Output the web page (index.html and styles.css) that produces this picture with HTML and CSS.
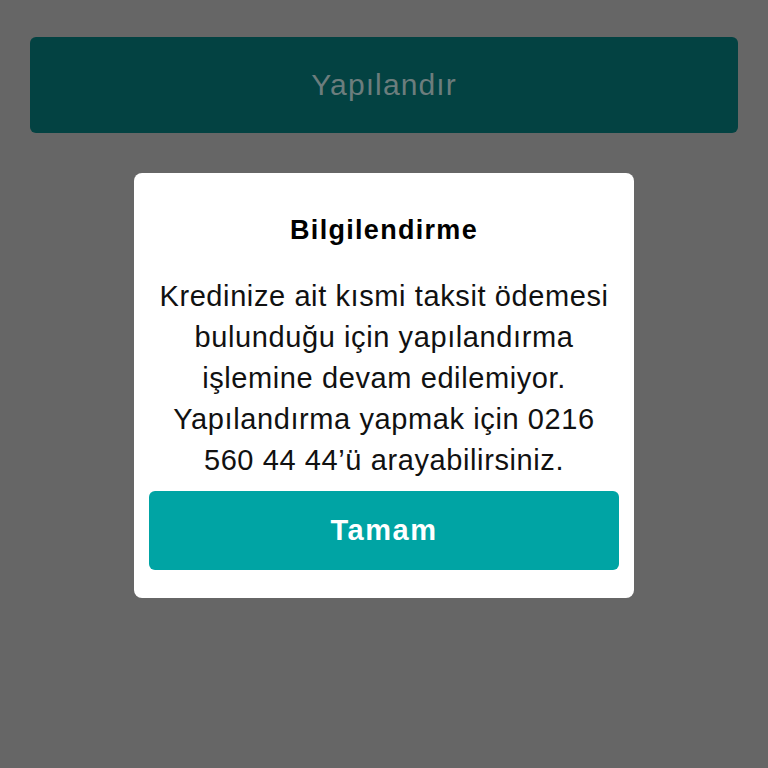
FILE: index.html
```html
<!DOCTYPE html>
<html lang="tr">
<head>
    <meta charset="UTF-8">
    <meta name="viewport" content="width=device-width, initial-scale=1.0">
    <title>Yapılandır</title>
    <link rel="stylesheet" href="styles.css">
</head>
<body>
    <main class="page">
        <button class="main-btn">Yapılandır</button>

        <div class="dialog">
            <h3 class="dialog-title">Bilgilendirme</h3>
            <p class="dialog-text">Kredinize ait kısmi taksit ödemesi<br>bulunduğu için yapılandırma<br>işlemine devam edilemiyor.<br>Yapılandırma yapmak için 0216<br>560 44 44’ü arayabilirsiniz.</p>
            <button class="ok-btn">Tamam</button>
        </div>
    </main>
</body>
</html>
```

FILE: styles.css
```css
/* Basic page styles */
body {
    font-family: "Liberation Sans", Arial, sans-serif;
    background-color: #666666;
    margin: 0;
    padding: 0;
}

.page {
    display: flex;
    flex-direction: column;
    align-items: center;
    padding: 37px 30px;
    min-height: 768px;
    box-sizing: border-box;
}

/* Dimmed button behind the dialog */
.main-btn {
    width: 100%;
    height: 96px;
    border: none;
    border-radius: 6px;
    background-color: #034242;
    color: #6c7d7d;
    font-family: inherit;
    font-size: 30px;
    letter-spacing: 1.1px;
}

/* Info dialog */
.dialog {
    margin-top: 40px;
    width: 500px;
    background-color: #fff;
    border-radius: 8px;
    padding: 42px 15px 28px;
    box-sizing: border-box;
    text-align: center;
}

.dialog-title {
    margin: 0;
    font-size: 27px;
    line-height: 30px;
    font-weight: bold;
    letter-spacing: 1.3px;
    color: #000;
}

.dialog-text {
    margin: 31px 0 10px;
    font-size: 29px;
    line-height: 41px;
    letter-spacing: 0.6px;
    white-space: nowrap;
    color: #111;
}

.ok-btn {
    display: block;
    width: 100%;
    height: 79px;
    border: none;
    border-radius: 6px;
    background-color: #00a4a4;
    color: #fff;
    font-family: inherit;
    font-size: 29px;
    font-weight: bold;
    letter-spacing: 1.5px;
    cursor: pointer;
}
```
